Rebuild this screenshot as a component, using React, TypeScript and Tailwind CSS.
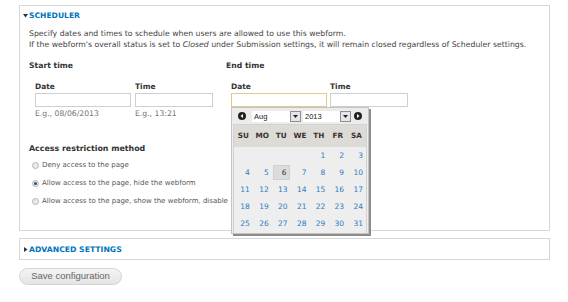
import React from "react";

const font = { fontFamily: '"DejaVu Sans", Verdana, sans-serif' };

function Radio({ checked, label }: { checked?: boolean; label: string }) {
  return (
    <div className="flex h-[18px] items-center">
      <span className="ml-[3px] mr-[3px] flex h-[7px] w-[7px] items-center justify-center rounded-full border border-[#b5b5b5] bg-[#e9e9e9]">
        {checked && <span className="h-[3px] w-[3px] rounded-full bg-[#2c4a75]" />}
      </span>
      <span className="text-[7px] leading-[11px] text-[#555]">{label}</span>
    </div>
  );
}

function Sel({ value, w }: { value: string; w: string }) {
  return (
    <div className={`flex h-[11px] items-stretch bg-white ${w}`}>
      <span className="flex-1 pl-[2px] text-[7.5px] leading-[11px] text-[#222]" style={{ fontFamily: '"Liberation Sans", Arial, sans-serif' }}>
        {value}
      </span>
      <span className="flex w-[11px] items-center justify-center border border-[#8f8f8f] bg-[#e6e6e6]">
        <svg width="5" height="3" viewBox="0 0 5 3">
          <path d="M0 0H5L2.5 3Z" fill="#222" />
        </svg>
      </span>
    </div>
  );
}

function Circ({ dir }: { dir: "l" | "r" }) {
  return (
    <svg width="8" height="8" viewBox="0 0 8 8">
      <circle cx="4" cy="4" r="4" fill="#222" />
      {dir === "l" ? <path d="M5 2V6L2.5 4Z" fill="#fff" /> : <path d="M3 2V6L5.5 4Z" fill="#fff" />}
    </svg>
  );
}

function DatePicker() {
  const days = ["SU", "MO", "TU", "WE", "TH", "FR", "SA"];
  const cells: (number | null)[] = [null, null, null, null];
  for (let i = 1; i <= 31; i++) cells.push(i);
  return (
    <div className="absolute left-0 top-full z-10 w-[138px] border border-[#c4c4c4] bg-[#eeeeee] shadow-[2px_2px_0_#8c8c8c]">
      <div className="flex h-[16px] items-center bg-[#ececec] px-[6px]">
        <Circ dir="l" />
        <div className="ml-[6px] flex gap-[2px]">
          <Sel value="Aug" w="w-[49px]" />
          <Sel value="2013" w="w-[48px]" />
        </div>
        <div className="ml-auto">
          <Circ dir="r" />
        </div>
      </div>
      <div className="mx-[1px] border border-b-0 border-[#d2d2d2]">
        <div className="grid h-[22px] grid-cols-7 items-center bg-[#dddbd6]">
          {days.map((d) => (
            <div key={d} className="text-center text-[7.3px] font-bold text-[#3a2f2f]">
              {d}
            </div>
          ))}
        </div>
        <div className="grid grid-cols-7 pb-[1px]">
          {cells.map((c, i) => (
            <div key={i} className="flex h-[17px] items-center justify-end px-[1px]">
              {c !== null && (
                <span
                  className={
                    "flex h-[15px] w-full items-center justify-end pr-[2px] text-[7.5px] " +
                    (c === 6 ? "border border-[#d0d0d0] bg-[#dcdcdc] text-[#333]" : "text-[#2f7bc2]")
                  }
                >
                  {c}
                </span>
              )}
            </div>
          ))}
        </div>
      </div>
    </div>
  );
}

function Field({ label, w, focus, hint, picker }: { label: string; w: string; focus?: boolean; hint?: string; picker?: boolean }) {
  return (
    <div className="relative flex flex-col">
      <div className="h-[11px] text-[7.5px] font-bold leading-[11px] text-[#333]">{label}</div>
      <div className="relative mt-[1px]">
        <div className={`h-[14px] ${w} border bg-white ${focus ? "border-[#e3c98c]" : "border-[#cfcfcf]"}`} />
        {picker && <DatePicker />}
      </div>
      <div className="mt-[1px] h-[11px] whitespace-nowrap text-[7.7px] leading-[11px] text-[#777]">{hint ?? ""}</div>
    </div>
  );
}

export default function App() {
  return (
    <div className="h-[302px] w-[568px] bg-white pl-[19px] pt-[5px]" style={font}>
      <div className="box-border h-[226px] w-[531px] border border-[#d6d6d6] px-[9px]">
        <div className="mt-[5px] flex h-[10px] items-center">
          <svg width="5" height="4" viewBox="0 0 5 4" className="-ml-[6px] mr-[1px]">
            <path d="M0 0H5L2.5 3.5Z" fill="#333" />
          </svg>
          <span className="text-[7.6px] font-bold leading-[10px] text-[#0074bd]">SCHEDULER</span>
        </div>
        <div className="mt-[7px] whitespace-nowrap text-[7.75px] leading-[11px] text-[#444]">
          <div>Specify dates and times to schedule when users are allowed to use this webform.</div>
          <div>
            If the webform's overall status is set to <i>Closed</i> under Submission settings, it will remain closed regardless of Scheduler settings.
          </div>
        </div>
        <div className="mt-[10px] flex">
          <div className="w-[197px]">
            <div className="h-[11px] text-[7.7px] font-bold leading-[11px] text-[#333]">Start time</div>
            <div className="mt-[10px] flex gap-[4px] pl-[6px]">
              <Field label="Date" w="w-[96px]" hint="E.g., 08/06/2013" />
              <Field label="Time" w="w-[78px]" hint="E.g., 13:21" />
            </div>
          </div>
          <div>
            <div className="h-[11px] text-[7.7px] font-bold leading-[11px] text-[#333]">End time</div>
            <div className="mt-[10px] flex gap-[3px] pl-[5px]">
              <Field label="Date" w="w-[96px]" focus picker />
              <Field label="Time" w="w-[78px]" />
            </div>
          </div>
        </div>
        <div className="mt-[24px] h-[11px] text-[7.9px] font-bold leading-[11px] text-[#333]">Access restriction method</div>
        <div className="mt-[2px]">
          <Radio label="Deny access to the page" />
          <Radio checked label="Allow access to the page, hide the webform" />
          <Radio label="Allow access to the page, show the webform, disable" />
        </div>
      </div>
      <div className="mt-[7px] box-border flex h-[22px] w-[531px] items-center border border-[#d6d6d6] px-[9px] pt-[1px]">
        <svg width="4" height="5" viewBox="0 0 4 5" className="-ml-[5px] mr-[1px]">
          <path d="M0 0V5L3.5 2.5Z" fill="#333" />
        </svg>
        <span className="text-[7.7px] font-bold leading-[10px] text-[#0074bd]">ADVANCED SETTINGS</span>
      </div>
      <button
        className="mt-[8px] flex h-[17px] w-[103px] items-center justify-center rounded-full border border-[#d4d4d4] bg-gradient-to-b from-[#f4f4f4] to-[#e4e4e4] text-[9.5px] text-[#666]"
        style={{ fontFamily: '"Liberation Sans", Arial, sans-serif' }}
      >
        Save configuration
      </button>
    </div>
  );
}
